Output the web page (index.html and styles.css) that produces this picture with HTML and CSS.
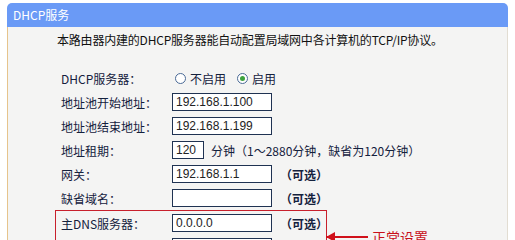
FILE: index.html
```html
<!DOCTYPE html>
<html lang="zh-CN">
<head>
    <meta charset="UTF-8">
    <title>DHCP服务</title>
    <link rel="stylesheet" href="styles.css">
</head>
<body>
    <div class="painel">
        <div class="painelTopo">DHCP服务</div>
        <div class="painelCorpo">
            <p class="intro">本路由器内建的DHCP服务器能自动配置局域网中各计算机的TCP/IP协议。</p>
            <div class="form">
                <div class="linha">
                    <label>DHCP服务器：</label>
                    <span class="radio"></span><span class="radioTexto">不启用</span>
                    <span class="radio marcado"></span><span class="radioTexto">启用</span>
                </div>
                <div class="linha">
                    <label>地址池开始地址：</label>
                    <input type="text" value="192.168.1.100">
                </div>
                <div class="linha">
                    <label>地址池结束地址：</label>
                    <input type="text" value="192.168.1.199">
                </div>
                <div class="linha">
                    <label>地址租期：</label>
                    <input type="text" class="curto" value="120">
                    <span class="nota">分钟（1～2880分钟，缺省为120分钟）</span>
                </div>
                <div class="linha">
                    <label>网关：</label>
                    <input type="text" value="192.168.1.1">
                    <span class="opcional">（可选）</span>
                </div>
                <div class="linha">
                    <label>缺省域名：</label>
                    <input type="text" value="">
                    <span class="opcional">（可选）</span>
                </div>
                <div class="caixaDns">
                    <div class="linha">
                        <label>主DNS服务器：</label>
                        <input type="text" value="0.0.0.0">
                        <span class="opcional">（可选）</span>
                    </div>
                    <div class="linha">
                        <label>备用DNS服务器：</label>
                        <input type="text" value="0.0.0.0">
                        <span class="opcional">（可选）</span>
                    </div>
                    <div class="aviso">
                        <span class="seta"></span>
                        <span class="avisoTexto">正常设置</span>
                    </div>
                </div>
            </div>
        </div>
    </div>
</body>
</html>
```

FILE: styles.css
```css
* {
    padding: 0;
    margin: 0;
    box-sizing: border-box;
}
body {
    background-color: #fff;
    font-family: "Noto Sans CJK SC", sans-serif;
    font-size: 12px;
    color: #14213d;
}
.painel {
    margin: 3px 7px 0 7px;
    width: 501px;
}
.painelTopo {
    height: 24px;
    line-height: 23px;
    padding-left: 6px;
    background-color: #6a9af6;
    color: #fff;
    border-radius: 5px 5px 0 0;
}
.painelCorpo {
    background-color: #f4f4f3;
    border-left: 1px solid #e6c48c;
    border-right: 1px solid #e2ddd2;
    padding: 5px 0 20px 48px;
    height: 240px;
}
.intro {
    margin-left: 1px;
    line-height: 16px;
    color: #111;
    margin-bottom: 18px;
    letter-spacing: -0.2px;
}
.linha {
    display: flex;
    align-items: center;
    height: 24px;
    padding-left: 5px;
}
.linha label {
    width: 111px;
    flex-shrink: 0;
}
.linha input {
    width: 100px;
    height: 18px;
    border: 1px solid #1f3252;
    background-color: #fff;
    font-family: "Liberation Sans", sans-serif;
    font-size: 12px;
    color: #222;
    padding: 0 3px;
}
.linha input.curto {
    width: 32px;
}
.nota {
    margin-left: 7px;
}
.opcional {
    margin-left: 8px;
    font-weight: bold;
}
.radio {
    width: 11px;
    height: 11px;
    border: 1px solid #4a6a96;
    border-radius: 50%;
    background-color: #fff;
    margin-left: 3px;
    display: flex;
    align-items: center;
    justify-content: center;
}
.radio.marcado {
    margin-left: 11px;
}
.radio.marcado::after {
    content: "";
    width: 5px;
    height: 5px;
    border-radius: 50%;
    background-color: #3ea33e;
}
.radioTexto {
    margin-left: 4px;
}
.caixaDns {
    position: relative;
    margin-left: -1px;
    width: 272px;
    border: 1px solid #c8202c;
}
.aviso {
    position: absolute;
    left: 100%;
    top: 18px;
    width: 100px;
    display: flex;
    align-items: center;
    white-space: nowrap;
}
.seta {
    flex-shrink: 0;
    width: 42px;
    height: 2px;
    background-color: #d0101a;
    position: relative;
}
.seta::before {
    content: "";
    position: absolute;
    left: 0;
    top: -4px;
    border-top: 5px solid transparent;
    border-bottom: 5px solid transparent;
    border-right: 9px solid #d0101a;
}
.avisoTexto {
    margin-left: 4px;
    color: #c8101a;
    font-size: 14px;
    line-height: 16px;
}
```
